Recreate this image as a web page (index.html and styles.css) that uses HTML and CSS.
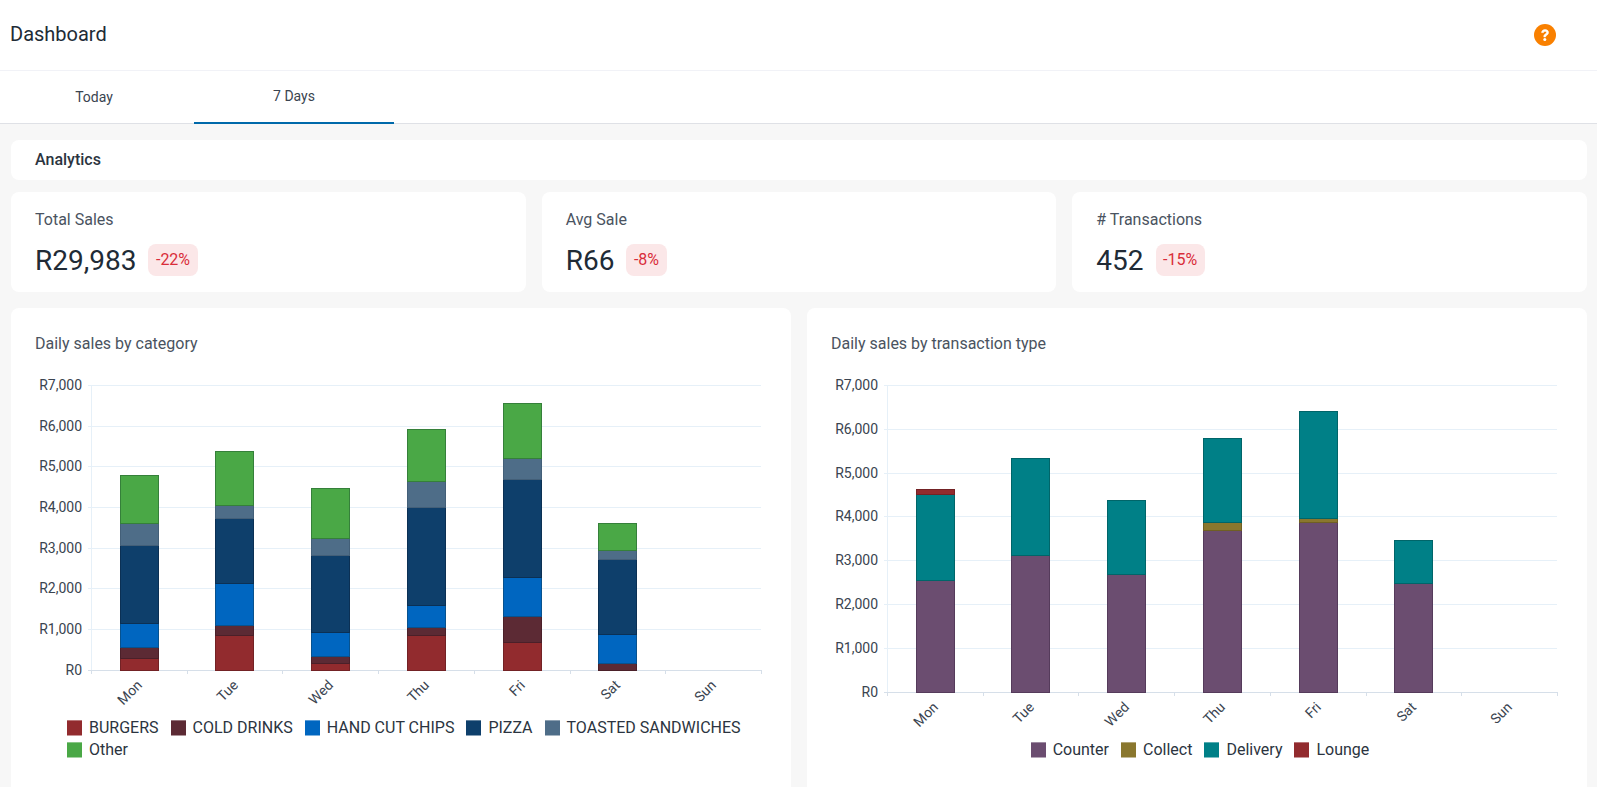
FILE: index.html
```html
<!DOCTYPE html>
<html lang="en">
<head>
<meta charset="utf-8">
<title>Dashboard</title>
<link rel="stylesheet" href="styles.css">
</head>
<body>
<header class="topbar">
  <h1 class="page-title">Dashboard</h1>
  <svg class="help" viewBox="0 0 22 22" width="22" height="22" aria-label="Help">
    <circle cx="11" cy="11" r="11" class="help-bg"/>
    <path d="M7.6 8.6C7.7 6.7 9.1 5.6 11.1 5.6c2 0 3.4 1.2 3.4 2.9 0 1.2-.6 2-1.7 2.7-.9.6-1.1.9-1.1 1.7h-1.9v-.3c0-1.2.4-1.9 1.5-2.6.9-.6 1.2-1 1.2-1.5 0-.7-.6-1.2-1.4-1.2-.9 0-1.5.5-1.6 1.3z" class="help-mark help-stroke"/>
    <circle cx="10.8" cy="15.6" r="1.5" class="help-mark"/>
  </svg>
</header>
<nav class="tabs">
  <a class="tab tab-first">Today</a>
  <a class="tab tab-active">7 Days</a>
</nav>
<main class="content">
  <section class="card section-head">Analytics</section>
  <section class="stats">
    <div class="card stat">
      <div class="stat-label">Total Sales</div>
      <div class="stat-row"><span class="stat-value">R29,983</span><span class="badge">-22%</span></div>
    </div>
    <div class="card stat">
      <div class="stat-label">Avg Sale</div>
      <div class="stat-row"><span class="stat-value">R66</span><span class="badge">-8%</span></div>
    </div>
    <div class="card stat">
      <div class="stat-label"># Transactions</div>
      <div class="stat-row"><span class="stat-value">452</span><span class="badge">-15%</span></div>
    </div>
  </section>
  <section class="charts">
    <div class="card chart-card">
      <h2 class="chart-title">Daily sales by category</h2>
      <svg class="chart chart-a" viewBox="11 368 780 349" width="780" height="349">
        <g class="grid">
          <path d="M88 385.5H761M92 426.5H761M92 466.5H761M92 507.5H761M92 548.5H761M92 588.5H761M92 629.5H761"/>
          <path d="M91.5 385V674"/>
        </g>
        <g class="axis">
          <path d="M88 670.5H761.5M91.5 670V674M187.5 670V674M282.5 670V674M378.5 670V674M474.5 670V674M570.5 670V674M665.5 670V674M761.5 670V674"/>
          <path class="tickmark" d="M88 426.5H92M88 466.5H92M88 507.5H92M88 548.5H92M88 588.5H92M88 629.5H92"/>
        </g>
        <g class="ylabels">
          <text x="82" y="390">R7,000</text><text x="82" y="431">R6,000</text><text x="82" y="471">R5,000</text><text x="82" y="512">R4,000</text><text x="82" y="553">R3,000</text><text x="82" y="593">R2,000</text><text x="82" y="634">R1,000</text><text x="82" y="675">R0</text>
        </g>
        <g class="xlabels">
          <text transform="translate(143 686) rotate(-45)">Mon</text>
          <text transform="translate(239 686) rotate(-45)">Tue</text>
          <text transform="translate(334 686) rotate(-45)">Wed</text>
          <text transform="translate(430 686) rotate(-45)">Thu</text>
          <text transform="translate(526 686) rotate(-45)">Fri</text>
          <text transform="translate(621 686) rotate(-45)">Sat</text>
          <text transform="translate(717 686) rotate(-45)">Sun</text>
        </g>
        <g class="s-burger">
          <rect x="120.5" y="658.5" width="38" height="12"/><rect x="215.5" y="635.5" width="38" height="35"/><rect x="311.5" y="663.5" width="38" height="7"/><rect x="407.5" y="635.5" width="38" height="35"/><rect x="503.5" y="642.5" width="38" height="28"/>
        </g>
        <g class="s-cold">
          <rect x="120.5" y="647.5" width="38" height="11"/><rect x="215.5" y="625.5" width="38" height="10"/><rect x="311.5" y="656.5" width="38" height="7"/><rect x="407.5" y="627.5" width="38" height="8"/><rect x="503.5" y="616.5" width="38" height="26"/><rect x="598.5" y="663.5" width="38" height="7"/>
        </g>
        <g class="s-chips">
          <rect x="120.5" y="623.5" width="38" height="24"/><rect x="215.5" y="583.5" width="38" height="42"/><rect x="311.5" y="632.5" width="38" height="24"/><rect x="407.5" y="605.5" width="38" height="22"/><rect x="503.5" y="577.5" width="38" height="39"/><rect x="598.5" y="634.5" width="38" height="29"/>
        </g>
        <g class="s-pizza">
          <rect x="120.5" y="545.5" width="38" height="78"/><rect x="215.5" y="518.5" width="38" height="65"/><rect x="311.5" y="555.5" width="38" height="77"/><rect x="407.5" y="507.5" width="38" height="98"/><rect x="503.5" y="479.5" width="38" height="98"/><rect x="598.5" y="559.5" width="38" height="75"/>
        </g>
        <g class="s-toast">
          <rect x="120.5" y="523.5" width="38" height="22"/><rect x="215.5" y="505.5" width="38" height="13"/><rect x="311.5" y="538.5" width="38" height="17"/><rect x="407.5" y="481.5" width="38" height="26"/><rect x="503.5" y="458.5" width="38" height="21"/><rect x="598.5" y="550.5" width="38" height="9"/>
        </g>
        <g class="s-other">
          <rect x="120.5" y="475.5" width="38" height="48"/><rect x="215.5" y="451.5" width="38" height="54"/><rect x="311.5" y="488.5" width="38" height="50"/><rect x="407.5" y="429.5" width="38" height="52"/><rect x="503.5" y="403.5" width="38" height="55"/><rect x="598.5" y="523.5" width="38" height="27"/>
        </g>
      </svg>
      <ul class="legend legend-a">
        <li class="legend-item"><i class="swatch c-burger"></i>BURGERS</li>
        <li class="legend-item"><i class="swatch c-cold"></i>COLD DRINKS</li>
        <li class="legend-item"><i class="swatch c-chips"></i>HAND CUT CHIPS</li>
        <li class="legend-item"><i class="swatch c-pizza"></i>PIZZA</li>
        <li class="legend-item"><i class="swatch c-toast"></i>TOASTED SANDWICHES</li>
        <li class="legend-item"><i class="swatch c-other"></i>Other</li>
      </ul>
    </div>
    <div class="card chart-card">
      <h2 class="chart-title">Daily sales by transaction type</h2>
      <svg class="chart chart-b" viewBox="807 368 780 371" width="780" height="371">
        <g class="grid">
          <path d="M884 385.5H1557M888 429.5H1557M888 473.5H1557M888 516.5H1557M888 560.5H1557M888 604.5H1557M888 648.5H1557"/>
          <path d="M887.5 385V696"/>
        </g>
        <g class="axis">
          <path d="M884 692.5H1557.5M887.5 692V696M983.5 692V696M1078.5 692V696M1174.5 692V696M1270.5 692V696M1366.5 692V696M1461.5 692V696M1557.5 692V696"/>
          <path class="tickmark" d="M884 429.5H888M884 473.5H888M884 516.5H888M884 560.5H888M884 604.5H888M884 648.5H888"/>
        </g>
        <g class="ylabels">
          <text x="878" y="390">R7,000</text><text x="878" y="434">R6,000</text><text x="878" y="478">R5,000</text><text x="878" y="521">R4,000</text><text x="878" y="565">R3,000</text><text x="878" y="609">R2,000</text><text x="878" y="653">R1,000</text><text x="878" y="697">R0</text>
        </g>
        <g class="xlabels">
          <text transform="translate(939 708) rotate(-45)">Mon</text>
          <text transform="translate(1035 708) rotate(-45)">Tue</text>
          <text transform="translate(1130 708) rotate(-45)">Wed</text>
          <text transform="translate(1226 708) rotate(-45)">Thu</text>
          <text transform="translate(1322 708) rotate(-45)">Fri</text>
          <text transform="translate(1417 708) rotate(-45)">Sat</text>
          <text transform="translate(1513 708) rotate(-45)">Sun</text>
        </g>
        <g class="s-counter">
          <rect x="916.5" y="580.5" width="38" height="112"/><rect x="1011.5" y="555.5" width="38" height="137"/><rect x="1107.5" y="574.5" width="38" height="118"/><rect x="1203.5" y="530.5" width="38" height="162"/><rect x="1299.5" y="522.5" width="38" height="170"/><rect x="1394.5" y="583.5" width="38" height="109"/>
        </g>
        <g class="s-collect">
          <rect x="1203.5" y="522.5" width="38" height="8"/><rect x="1299.5" y="518.5" width="38" height="4"/>
        </g>
        <g class="s-delivery">
          <rect x="916.5" y="494.5" width="38" height="86"/><rect x="1011.5" y="458.5" width="38" height="97"/><rect x="1107.5" y="500.5" width="38" height="74"/><rect x="1203.5" y="438.5" width="38" height="84"/><rect x="1299.5" y="411.5" width="38" height="107"/><rect x="1394.5" y="540.5" width="38" height="43"/>
        </g>
        <g class="s-burger">
          <rect x="916.5" y="489.5" width="38" height="5"/>
        </g>
      </svg>
      <ul class="legend legend-b">
        <li class="legend-item"><i class="swatch c-counter"></i>Counter</li>
        <li class="legend-item"><i class="swatch c-collect"></i>Collect</li>
        <li class="legend-item"><i class="swatch c-delivery"></i>Delivery</li>
        <li class="legend-item"><i class="swatch c-burger"></i>Lounge</li>
      </ul>
    </div>
  </section>
</main>
</body>
</html>
```

FILE: styles.css
```css
* { box-sizing: border-box; }
html, body { margin: 0; height: 787px; overflow: hidden; }
body {
  font-family: Roboto, "Liberation Sans", sans-serif;
  color: #212b36;
  background: #f7f7f7;
}
.topbar {
  height: 71px;
  background: #fff;
  border-bottom: 1px solid #f1f2f7;
  display: flex;
  align-items: center;
  justify-content: space-between;
  padding: 0 41px 2px 10px;
}
.page-title { margin: 0; font-size: 20px; font-weight: 400; }
.help { display: block; margin-top: 2px; }
.help-bg { fill: #f98000; }
.help-mark { fill: #fff; }
.help-stroke { stroke: #fff; stroke-width: .6; }
.tabs {
  height: 53px;
  display: flex;
  background: #fff;
  border-bottom: 1px solid #dfe1e6;
}
.tab {
  width: 200px;
  font-size: 14px;
  color: #3a4450;
  text-align: center;
  line-height: 50px;
}
.tab-first { width: 194px; padding: 1px 6px 0 0; }
.tab-active { height: 53px; border-bottom: 2px solid #0069aa; }
.content { padding: 16px 10px 0 11px; display: flex; flex-direction: column; gap: 12px; }
.card { background: #fff; border-radius: 8px; }
.section-head {
  height: 40px;
  padding: 0 24px 2px;
  display: flex;
  align-items: center;
  font-size: 16px;
  font-weight: 500;
  color: #2b3440;
}
.stats { display: grid; grid-template-columns: repeat(3, 1fr); gap: 16px; }
.stat { height: 100px; padding: 18px 24px 0; }
.stat-label { font-size: 16px; line-height: 19px; color: #4a5360; }
.stat-row { display: flex; align-items: flex-start; gap: 12px; margin-top: 15px; }
.stat-value { font-size: 28px; line-height: 34px; }
.badge {
  height: 32px;
  padding: 0 8px 0 7.5px;
  border-radius: 8px;
  background: #fbe7e8;
  color: #d92d3a;
  font-size: 16px;
  line-height: 32px;
}
.charts { display: grid; grid-template-columns: repeat(2, 1fr); gap: 16px; margin-top: 4px; }
.chart-card { height: 500px; }
.chart-title {
  margin: 0;
  height: 60px;
  padding: 27px 24px 0;
  font-size: 16px;
  line-height: 18px;
  font-weight: 400;
  color: #4a5360;
}
.chart { display: block; }
.grid path { fill: none; stroke: #e6f0f8; stroke-width: 1; }
.axis path { fill: none; stroke: #d6dfe9; stroke-width: 1; }
.axis .tickmark { stroke: #e6f0f8; }
.ylabels text { font-size: 14px; fill: #3a4450; text-anchor: end; }
.xlabels text { font-size: 14px; fill: #3a4450; text-anchor: end; }
.s-other rect { fill: #4aa846; stroke: #35803a; }
.s-toast rect { fill: #4e6d88; stroke: #435f78; }
.s-pizza rect { fill: #0e3f6b; stroke: #0b3054; }
.s-chips rect { fill: #0066c0; stroke: #07528f; }
.s-cold rect { fill: #5c2a34; stroke: #4b2029; }
.s-burger rect { fill: #922b2e; stroke: #732225; }
.s-counter rect { fill: #6b4d70; stroke: #553b5b; }
.s-collect rect { fill: #8a772e; stroke: #6f5f24; }
.s-delivery rect { fill: #008087; stroke: #006569; }
.legend {
  list-style: none;
  margin: 0;
  display: flex;
  flex-wrap: wrap;
  font-size: 16px;
  line-height: 22px;
  color: #2b3440;
  column-gap: 12px;
}
.legend-a { padding: 0 40px 0 56px; }
.legend-b { padding: 0 0 0 6px; justify-content: center; }
.legend-item { display: flex; align-items: center; gap: 7px; }
.swatch {
  display: block;
  width: 15px;
  height: 16px;
  border-top: 1px solid rgba(255, 255, 255, .35);
  border-bottom: 1px solid rgba(255, 255, 255, .5);
}
.c-burger { background: #922b2e; }
.c-cold { background: #5c2a34; }
.c-chips { background: #0066c0; }
.c-pizza { background: #0e3f6b; }
.c-toast { background: #4e6d88; }
.c-other { background: #4aa846; }
.c-counter { background: #6b4d70; }
.c-collect { background: #8a772e; }
.c-delivery { background: #008087; }
```
